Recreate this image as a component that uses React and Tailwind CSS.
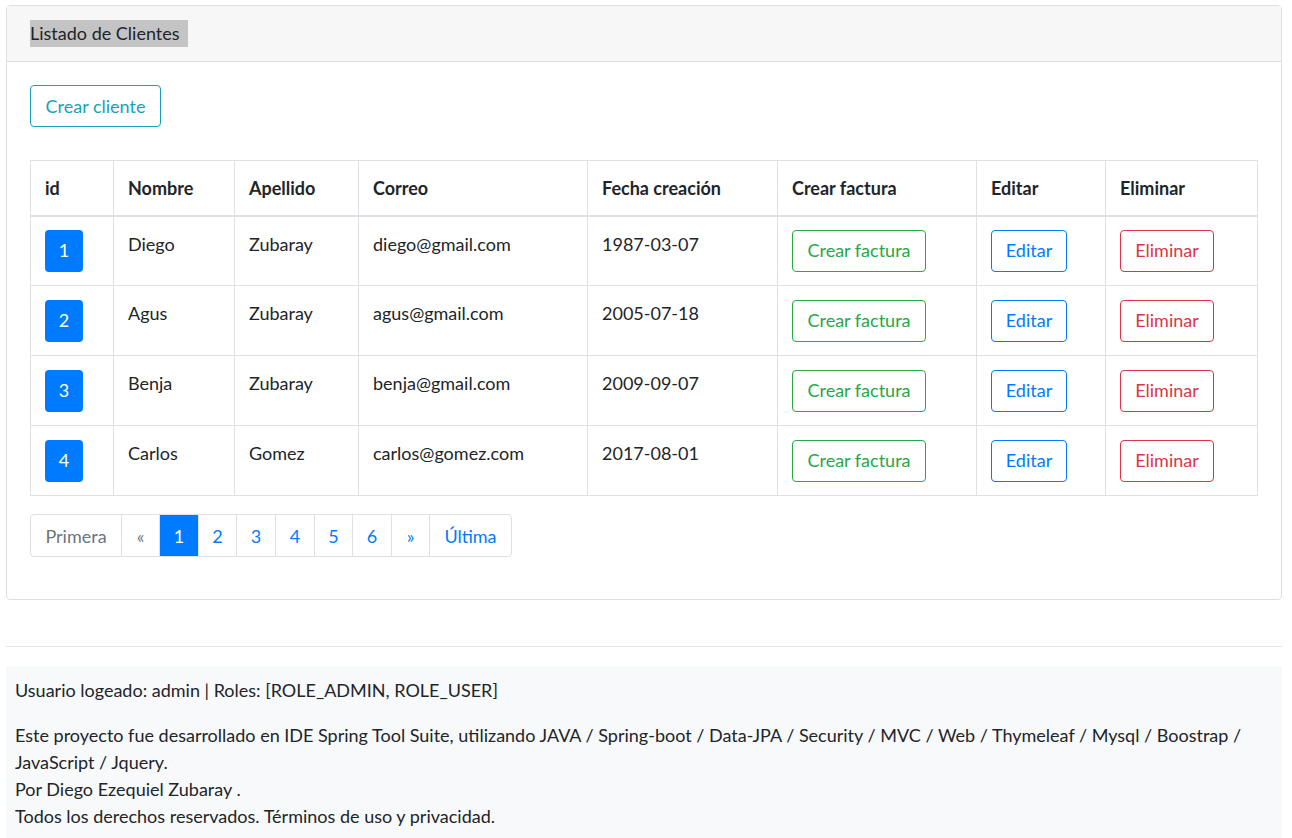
import React from 'react';

const CLIENTES = [
  { id: 1, nombre: 'Diego', apellido: 'Zubaray', correo: 'diego@gmail.com', fecha: '1987-03-07' },
  { id: 2, nombre: 'Agus', apellido: 'Zubaray', correo: 'agus@gmail.com', fecha: '2005-07-18' },
  { id: 3, nombre: 'Benja', apellido: 'Zubaray', correo: 'benja@gmail.com', fecha: '2009-09-07' },
  { id: 4, nombre: 'Carlos', apellido: 'Gomez', correo: 'carlos@gomez.com', fecha: '2017-08-01' },
];

const COLS = [
  { label: 'id', w: 'w-[83px]' },
  { label: 'Nombre', w: 'w-[121px]' },
  { label: 'Apellido', w: 'w-[124px]' },
  { label: 'Correo', w: 'w-[229px]' },
  { label: 'Fecha creación', w: 'w-[190px]' },
  { label: 'Crear factura', w: 'w-[199px]' },
  { label: 'Editar', w: 'w-[129px]' },
  { label: 'Eliminar', w: 'w-[152px]' },
];

const PAGES = [
  { label: 'Primera', w: 'w-[92px]', muted: true },
  { label: '«', w: 'w-[39px]', muted: true },
  { label: '1', w: 'w-[40px]', active: true },
  { label: '2', w: 'w-[39px]' },
  { label: '3', w: 'w-[40px]' },
  { label: '4', w: 'w-[40px]' },
  { label: '5', w: 'w-[39px]' },
  { label: '6', w: 'w-[40px]' },
  { label: '»', w: 'w-[39px]' },
  { label: 'Última', w: 'w-[83px]' },
];

export default function App() {
  return (
    <div className="min-h-[838px] bg-white pt-[5px] pl-[6px] text-[18px] leading-[27px] text-[#212529] font-['Lato',sans-serif]">
      <div className="w-[1276px]">
        <div className="rounded-[4px] border border-[#dfdfdf]">
          <div className="h-[56px] border-b border-[#dfdfdf] bg-[#f7f7f7] px-[23px] pt-[14px]">
            <span className="inline-block w-[158px] bg-[#c4c4c4]">Listado de Clientes</span>
          </div>

          <div className="px-[23px] pt-[23px] pb-[42px]">
            <button className="h-[42px] w-[131px] rounded-[4px] border border-[#17a2b8] text-[#17a2b8]">
              Crear cliente
            </button>

            <table className="mt-[33px] w-[1228px] table-fixed border-collapse">
              <thead>
                <tr>
                  {COLS.map((c) => (
                    <th
                      key={c.label}
                      className={`${c.w} h-[55px] border border-b-2 border-[#dee2e6] px-[14px] pt-[1px] text-left align-middle font-bold`}
                    >
                      {c.label}
                    </th>
                  ))}
                </tr>
              </thead>
              <tbody>
                {CLIENTES.map((c) => (
                  <tr key={c.id} className="h-[70px]">
                    <td className="border border-[#dee2e6] px-[14px] align-middle">
                      <button className="h-[42px] w-[38px] rounded-[4px] bg-[#007bff] text-white">{c.id}</button>
                    </td>
                    <td className="border border-[#dee2e6] px-[14px] pt-[14px] align-top">{c.nombre}</td>
                    <td className="border border-[#dee2e6] px-[14px] pt-[14px] align-top">{c.apellido}</td>
                    <td className="border border-[#dee2e6] px-[14px] pt-[14px] align-top">{c.correo}</td>
                    <td className="border border-[#dee2e6] px-[14px] pt-[14px] align-top">{c.fecha}</td>
                    <td className="border border-[#dee2e6] px-[14px] align-middle">
                      <button className="h-[42px] w-[134px] rounded-[4px] border border-[#28a745] text-[#28a745]">
                        Crear factura
                      </button>
                    </td>
                    <td className="border border-[#dee2e6] px-[14px] align-middle">
                      <button className="h-[42px] w-[76px] rounded-[4px] border border-[#007bff] text-[#007bff]">
                        Editar
                      </button>
                    </td>
                    <td className="border border-[#dee2e6] px-[14px] align-middle">
                      <button className="h-[42px] w-[94px] rounded-[4px] border border-[#dc3545] text-[#dc3545]">
                        Eliminar
                      </button>
                    </td>
                  </tr>
                ))}
              </tbody>
            </table>

            <ul className="mt-[18px] flex">
              {PAGES.map((p, i) => (
                <li
                  key={p.label}
                  className={`${p.w} flex h-[43px] items-center justify-center border border-[#dee2e6] pt-[2px] ${
                    i > 0 ? '-ml-px' : 'rounded-l-[4px]'
                  } ${i === PAGES.length - 1 ? 'rounded-r-[4px]' : ''} ${
                    p.active
                      ? 'relative z-10 border-[#007bff] bg-[#007bff] text-white'
                      : p.muted
                      ? 'text-[#6c757d]'
                      : 'text-[#007bff]'
                  }`}
                >
                  {p.label}
                </li>
              ))}
            </ul>
          </div>
        </div>

        <hr className="mt-[46px] border-t border-[#e5e5e5]" />

        <footer className="mt-[19px] bg-[#f8f9fa] pl-[9px] pr-[10px] pt-[11px] pb-[10px]">
          <p className="mb-[18px]">Usuario logeado: admin | Roles: [ROLE_ADMIN, ROLE_USER]</p>
          <p>
            Este proyecto fue desarrollado en IDE Spring Tool Suite, utilizando JAVA / Spring-boot / Data-JPA /
            Security / MVC / Web / Thymeleaf / Mysql / Boostrap / <br />
            JavaScript / Jquery.
            <br />
            Por Diego Ezequiel Zubaray .
            <br />
            Todos los derechos reservados. Términos de uso y privacidad.
          </p>
        </footer>
      </div>
    </div>
  );
}
